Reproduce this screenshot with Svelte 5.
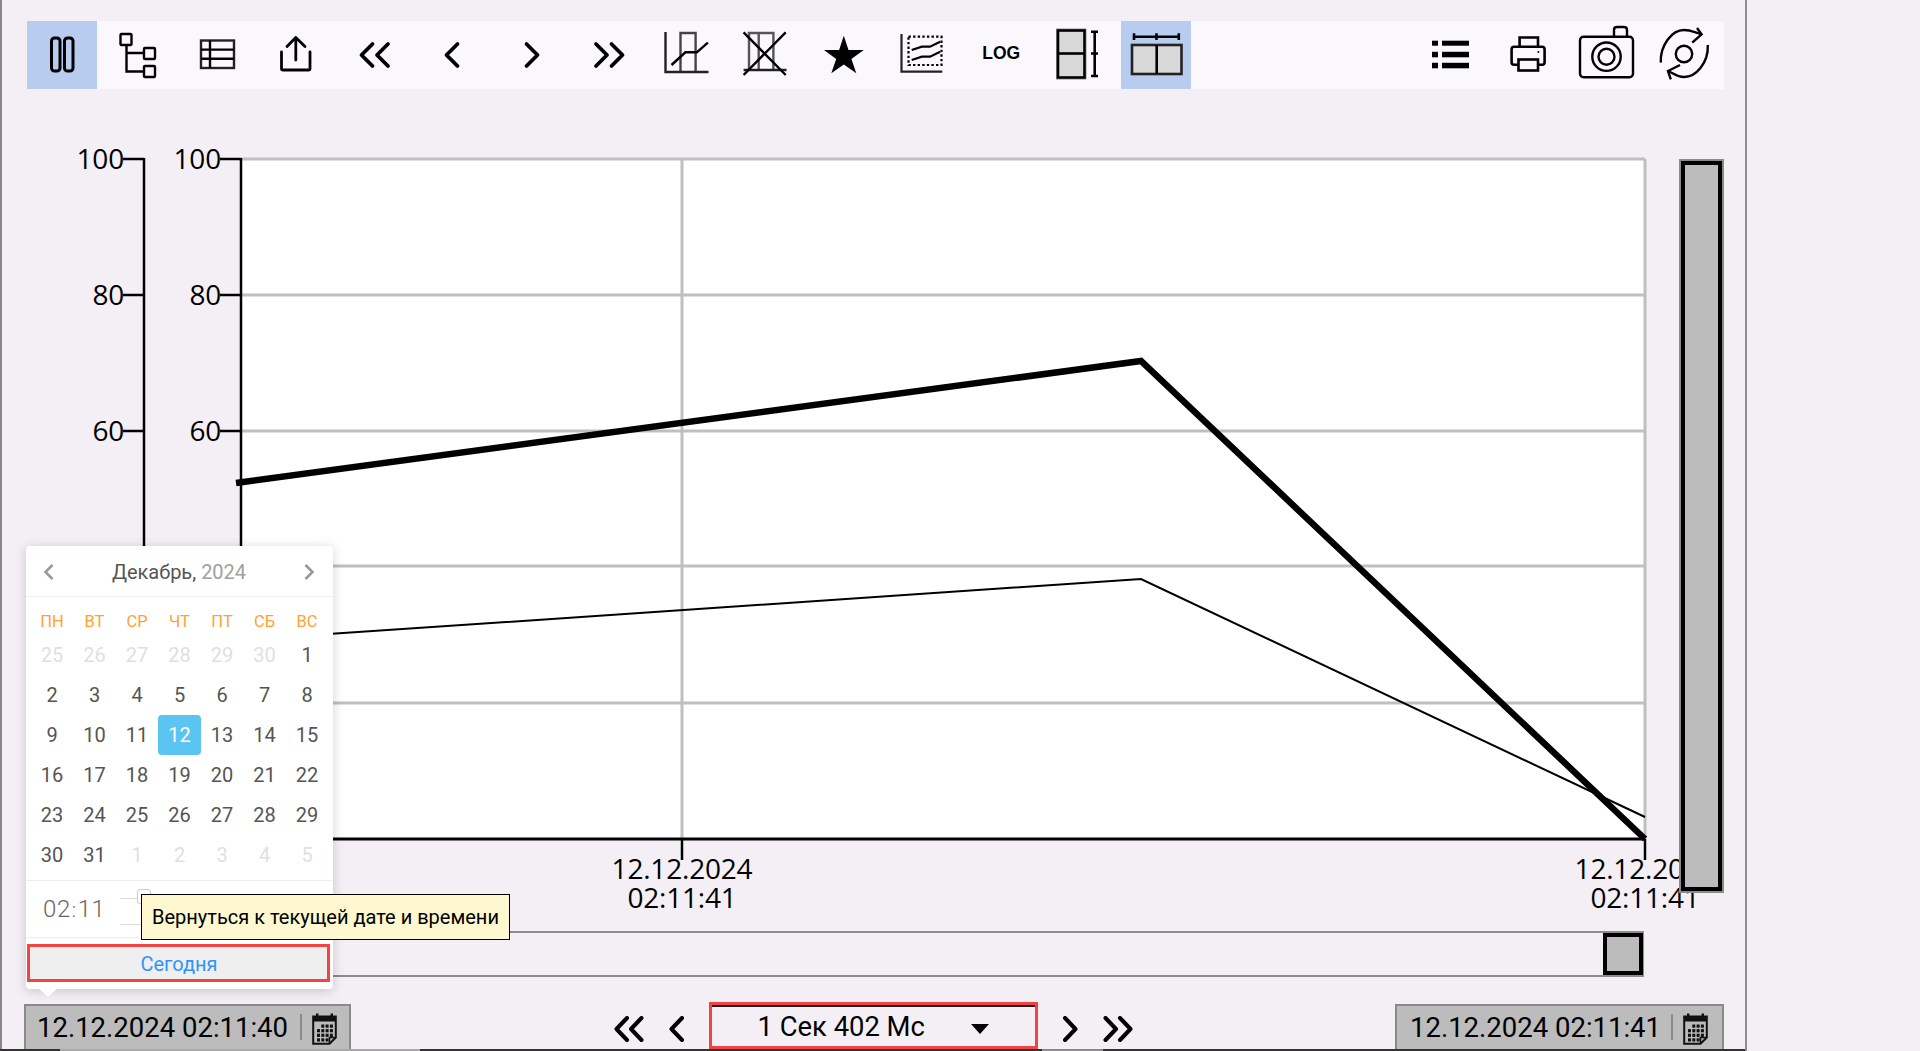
<script>
  const gridY = [159, 295, 431, 566, 703, 839]
  const ticks = [100, 80, 60, 40, 20, 0]
  const axes = [144, 241]

  const weekdays = ['ПН', 'ВТ', 'СР', 'ЧТ', 'ПТ', 'СБ', 'ВС']
  const days = []
  for (let d = 25; d <= 30; d++) days.push({ n: d, off: true })
  for (let d = 1; d <= 31; d++) days.push({ n: d, off: false })
  for (let d = 1; d <= 5; d++) days.push({ n: d, off: true })

  const calCells = []
  for (let r = 0; r < 4; r++) {
    for (let c = 0; c < 4; c++) {
      if (r === 3 && c === 3) continue
      if (r === 0 && c === 0) continue
      calCells.push({ x: 5 + c * 4.3, y: 11.5 + r * 4.6 })
    }
  }
</script>

{#snippet calIcon()}
  <svg class="cal" width="25" height="32" viewBox="0 0 25 32">
    <path d="M1.2 3.5H23.8V24.5L17.5 30.8H1.2Z" fill="none" stroke="#111" stroke-width="2" />
    <path d="M17.5 30.8V24.5H23.8" fill="none" stroke="#111" stroke-width="1.6" />
    <rect x="1" y="3.5" width="23" height="5" fill="#111" />
    <rect x="4" y="0.5" width="2.4" height="4" fill="#111" />
    <rect x="18.6" y="0.5" width="2.4" height="4" fill="#111" />
    {#each calCells as c}
      <rect x={c.x} y={c.y} width="3" height="3.2" fill="#111" />
    {/each}
  </svg>
{/snippet}

{#snippet dbl(flip)}
  <svg width="30" height="26" viewBox="0 0 30 26" class:flip>
    <path d="M13 2 L2.5 13 L13 24 M27.5 2 L17 13 L27.5 24" fill="none" stroke="#000" stroke-width="4" stroke-linecap="round" stroke-linejoin="round" />
  </svg>
{/snippet}

{#snippet single(flip)}
  <svg width="15" height="26" viewBox="0 0 15 26" class:flip>
    <path d="M13 2 L2.5 13 L13 24" fill="none" stroke="#000" stroke-width="4" stroke-linecap="round" stroke-linejoin="round" />
  </svg>
{/snippet}

<div class="page">
  <div class="toolbar">
    <button class="active" title="Пауза">
      <svg viewBox="0 0 70 68">
        <rect x="24.5" y="17" width="8.5" height="33" rx="3" fill="none" stroke="#000" stroke-width="3" />
        <rect x="37.5" y="17" width="8.5" height="33" rx="3" fill="none" stroke="#000" stroke-width="3" />
      </svg>
    </button>
    <button title="Дерево">
      <svg viewBox="0 0 70 68" fill="none" stroke="#000" stroke-width="2.4">
        <rect x="15.5" y="13" width="11" height="11" rx="1" />
        <rect x="39" y="27" width="11" height="11" rx="1" />
        <rect x="39" y="45" width="11" height="11" rx="1" />
        <path d="M21.5 24V50.5H39M21.5 32H39" />
      </svg>
    </button>
    <button title="Таблица">
      <svg viewBox="0 0 70 68" fill="none" stroke="#000" stroke-width="2.4">
        <rect x="18" y="19.5" width="33" height="27.5" stroke="#222" />
        <path d="M27 19.5V47M18 28.6H51M18 37.8H51" />
      </svg>
    </button>
    <button title="Экспорт">
      <svg viewBox="0 0 70 68" fill="none" stroke="#000" stroke-width="2.8" stroke-linecap="round" stroke-linejoin="round">
        <path d="M20.5 31V47.5Q20.5 49 22 49H47.5Q49 49 49 47.5V31" />
        <path d="M34.8 17V39M26 25.5L34.8 16.5L44 25.5" />
      </svg>
    </button>
    <button title="В начало">
      <svg viewBox="0 0 70 68" fill="none" stroke="#000" stroke-width="3.8" stroke-linecap="round" stroke-linejoin="round">
        <path d="M32.5 23L21.5 34L32.5 45M48 23L37 34L48 45" />
      </svg>
    </button>
    <button title="Назад">
      <svg viewBox="0 0 70 68" fill="none" stroke="#000" stroke-width="3.8" stroke-linecap="round" stroke-linejoin="round">
        <path d="M39.5 23L28.5 34L39.5 45" />
      </svg>
    </button>
    <button title="Вперёд">
      <svg viewBox="0 0 70 68" fill="none" stroke="#000" stroke-width="3.8" stroke-linecap="round" stroke-linejoin="round">
        <path d="M30.5 23L41.5 34L30.5 45" />
      </svg>
    </button>
    <button title="В конец">
      <svg viewBox="0 0 70 68" fill="none" stroke="#000" stroke-width="3.8" stroke-linecap="round" stroke-linejoin="round">
        <path d="M22 23L33 34L22 45M37.5 23L48.5 34L37.5 45" />
      </svg>
    </button>
    <button title="Зум">
      <svg viewBox="0 0 70 68" fill="none" stroke-width="2.4">
        <path d="M28.5 51V12H43.6V51" stroke="#444" />
        <path d="M13.5 11V51H56.5" stroke="#222" />
        <path d="M19.5 44L33.4 31.3H44.8L55.9 21.7" stroke="#000" />
      </svg>
    </button>
    <button title="Сбросить зум">
      <svg viewBox="0 0 70 68" fill="none" stroke-width="2.4">
        <path d="M19 49V12H43.4V49M28.7 12V49" stroke="#555" />
        <path d="M13.6 49H56.5" stroke="#222" />
        <path d="M13.6 11.3L55.7 54M55.7 11.3L13.6 54" stroke="#000" />
      </svg>
    </button>
    <button title="Избранное">
      <svg viewBox="0 0 70 68">
        <polygon points="35.8,14.7 40.5,29 55.7,29 43.4,38 48.3,52.3 35.8,43.5 23.3,52.3 28.2,38 16,29 31.1,29" fill="#000" />
      </svg>
    </button>
    <button title="Область">
      <svg viewBox="0 0 70 68" fill="none" stroke="#000" stroke-width="2.2">
        <path d="M14.5 13V50.7H55.3" stroke="#222" />
        <rect x="21.5" y="15.7" width="33" height="28.3" stroke-dasharray="2.4 2.2" />
        <path d="M24.7 29L34.9 25.7H43L53.2 20.7M24.7 39L34.9 35.7H43L53.2 30.7" />
      </svg>
    </button>
    <button class="log" title="Логарифм">LOG</button>
    <button title="Вертикально">
      <svg viewBox="0 0 70 68" fill="none" stroke="#000" stroke-width="2.6">
        <rect x="13.5" y="8" width="29.5" height="50" fill="#d8d8d8" stroke="#8f8f8f" stroke-width="1" />
        <rect x="15" y="9.5" width="26.5" height="47" stroke="#000" />
        <path d="M15 32.5H41.5" />
        <path d="M51.7 10.7V55M48 10.7H55M48 32.5H55M48 55H55" />
      </svg>
    </button>
    <button class="active" title="Горизонтально">
      <svg viewBox="0 0 70 68" fill="none" stroke="#000" stroke-width="2.6">
        <rect x="11" y="24" width="49.5" height="29" fill="#d8d8d8" stroke="#222" />
        <path d="M35.7 24V53" />
        <path d="M13 15.7H57.8M13 12.3V19M35.5 12.3V19M57.8 12.3V19" />
      </svg>
    </button>

    <div class="spacer"></div>

    <button title="Легенда">
      <svg viewBox="0 0 70 68" fill="#000">
        <rect x="17" y="19.7" width="6" height="5" />
        <rect x="17" y="30.8" width="6" height="5.5" />
        <rect x="17" y="41.8" width="6" height="5.5" />
        <rect x="27" y="19.7" width="27" height="5" />
        <rect x="27" y="30.8" width="27" height="5.5" />
        <rect x="27" y="41.8" width="27" height="5.5" />
      </svg>
    </button>
    <button title="Печать">
      <svg viewBox="0 0 70 68" fill="none" stroke="#000" stroke-width="2.6">
        <path d="M26.6 25.7V16.5H45V25.7" />
        <rect x="18.6" y="25.7" width="33" height="18" rx="2.5" />
        <rect x="25.5" y="38.5" width="19.5" height="11" fill="#faf8fc" />
        <circle cx="45.4" cy="31" r="1" fill="#000" stroke="none" />
      </svg>
    </button>
    <button title="Снимок">
      <svg viewBox="0 0 70 68" fill="none" stroke="#000" stroke-width="2.4">
        <path d="M43 15.7V9Q43 6 46 6H53Q56 6 56 9V15.7" />
        <rect x="9" y="15.7" width="53" height="40.5" rx="3.5" />
        <circle cx="35.5" cy="35.7" r="14.2" />
        <circle cx="35.5" cy="35.7" r="8" />
      </svg>
    </button>
    <button title="Обновить">
      <svg viewBox="0 0 70 68" fill="none" stroke="#000" stroke-width="2.4">
        <circle cx="35" cy="33" r="8.2" />
        <path d="M11.8 41.5C11 24 23 9 35 9C42 9 47 12 52 13" />
        <path d="M48 7L52.6 13.4L43.2 21.7" />
        <path d="M58.8 24C59.5 42 47 56 35 56C28 56 24 52 19 50" />
        <path d="M31 44L19 50L21.8 58.3" />
      </svg>
    </button>
  </div>

  <div class="chart">
    <svg class="plot" width="1745" height="915" viewBox="0 89 1745 915">
      <rect x="241" y="159" width="1404" height="680" fill="#fff" />
      {#each gridY.slice(0, 5) as y}
        <line x1="241" x2="1645" y1={y} y2={y} stroke="#bfbfbf" stroke-width="3" />
      {/each}
      <line x1="682" x2="682" y1="159" y2="839" stroke="#bfbfbf" stroke-width="3" />
      <line x1="1645" x2="1645" y1="159" y2="839" stroke="#bfbfbf" stroke-width="3" />

      {#each axes as ax}
        <line x1={ax} x2={ax} y1="158" y2="840" stroke="#000" stroke-width="2.5" />
        {#each gridY as y, i}
          <line x1={ax - 21} x2={ax} y1={y} y2={y} stroke="#000" stroke-width="2.5" />
          <text x={ax - 20} y={y + 10} text-anchor="end" class="lbl">{ticks[i]}</text>
        {/each}
      {/each}

      <line x1="240" x2="1645" y1="839" y2="839" stroke="#000" stroke-width="3" />
      <line x1="682" x2="682" y1="839" y2="860" stroke="#000" stroke-width="2.5" />
      <line x1="1645" x2="1645" y1="839" y2="860" stroke="#000" stroke-width="2.5" />

      <polyline points="241,640 1141,579 1645,817" fill="none" stroke="#000" stroke-width="2" />
      <polyline points="236,483 1141,361 1645,839" fill="none" stroke="#000" stroke-width="6.5" />

      <text x="682" y="879" text-anchor="middle" class="lbl">12.12.2024</text>
      <text x="682" y="908" text-anchor="middle" class="lbl">02:11:41</text>
      <text x="1645" y="879" text-anchor="middle" class="lbl">12.12.2024</text>
      <text x="1645" y="908" text-anchor="middle" class="lbl">02:11:41</text>
    </svg>
    <div class="vscroll"></div>
    <div class="hscroll"><div class="thumb"></div></div>
  </div>

  <div class="bottom">
    <div class="date">
      <span>12.12.2024 02:11:40</span>
      <i class="sep"></i>
      {@render calIcon()}
    </div>
    <div class="nav">
      {@render dbl(false)}
      {@render single(false)}
      <div class="period">
        <span>1 Сек 402 Мс</span>
        <i class="caret"></i>
      </div>
      {@render single(true)}
      {@render dbl(true)}
    </div>
    <div class="date to">
      <span>12.12.2024 02:11:41</span>
      <i class="sep"></i>
      {@render calIcon()}
    </div>
  </div>

  <div class="edge"></div>

  <div class="popup">
    <div class="head">
      <svg width="12" height="18" viewBox="0 0 12 18"><path d="M9.5 2L2.5 9L9.5 16" fill="none" stroke="#999" stroke-width="2.6" /></svg>
      <div class="month">Декабрь, <span>2024</span></div>
      <svg width="12" height="18" viewBox="0 0 12 18"><path d="M2.5 2L9.5 9L2.5 16" fill="none" stroke="#999" stroke-width="2.6" /></svg>
    </div>
    <div class="weekdays">
      {#each weekdays as w}<span>{w}</span>{/each}
    </div>
    <div class="days">
      {#each days as d}
        <span class:off={d.off} class:sel={!d.off && d.n === 12}>{d.n}</span>
      {/each}
    </div>
    <div class="time">
      <span class="hm">02<em>:</em>11</span>
      <div class="spin"><i></i></div>
    </div>
    <button class="today">Сегодня</button>
    <i class="tail"></i>
  </div>

  <div class="tip">Вернуться к текущей дате и времени</div>
</div>

<style>
  :global(body) {
    background: #f4eff5;
    overflow: hidden;
  }

  .page {
    position: relative;
    box-sizing: border-box;
    width: 1747px;
    height: 1051px;
    padding-top: 21px;
    border-right: 2px solid #8e8e8e;
    box-shadow: inset 2px 0 0 #868686;
    overflow: hidden;
    font-family: Roboto, sans-serif;
  }

  .toolbar {
    display: flex;
    gap: 8.15px;
    height: 68px;
    margin: 0 21px 0 27px;
    padding-right: 5px;
    background: #faf8fc;
  }

  .toolbar button {
    flex: none;
    width: 70px;
    height: 68px;
    padding: 0;
    border: 0;
    background: none;
  }

  .toolbar button.active {
    background: #b7ccee;
  }

  .toolbar svg {
    display: block;
    width: 70px;
    height: 68px;
  }

  .toolbar .log {
    padding-bottom: 3px;
    padding-left: 3px;
    font: bold 17.5px "Liberation Sans", sans-serif;
    color: #000;
  }

  .spacer {
    flex: 1;
  }

  .chart {
    position: relative;
    height: 915px;
  }

  .plot {
    display: block;
  }

  .lbl {
    font-family: "Open Sans", sans-serif;
    font-size: 28px;
    letter-spacing: -0.2px;
    fill: #000;
  }

  .vscroll {
    position: absolute;
    left: 1681px;
    top: 72px;
    box-sizing: border-box;
    width: 41px;
    height: 730px;
    background: #bcbcbc;
    border: 4px solid #000;
    outline: 2px solid #8a8a8a;
  }

  .hscroll {
    position: absolute;
    left: 27px;
    top: 842px;
    box-sizing: border-box;
    width: 1617px;
    height: 46px;
    border-top: 2px solid #8c8c8c;
    border-bottom: 2px solid #8c8c8c;
    border-right: 1px solid #8c8c8c;
  }

  .thumb {
    box-sizing: border-box;
    width: 40px;
    height: 42px;
    margin-left: auto;
    background: #bcbcbc;
    border: 4px solid #000;
  }

  .bottom {
    display: flex;
    justify-content: space-between;
    height: 47px;
    padding: 0 21px 0 24px;
  }

  .date {
    display: flex;
    align-items: center;
    box-sizing: border-box;
    width: 327px;
    height: 47px;
    padding: 0 0 3px 11px;
    background: #bcbcbc;
    border: 2px solid #8a8a8a;
    border-bottom: 0;
    font-size: 27.5px;
    color: #000;
    white-space: nowrap;
  }

  .date.to {
    width: 329px;
    padding-left: 13px;
  }

  .sep {
    flex: none;
    width: 2px;
    height: 26px;
    margin: 0 10px 0 12px;
    background: #8a8a8a;
  }

  .date.to .sep {
    margin-left: 10px;
  }

  .cal {
    flex: none;
    margin-top: 4px;
  }

  .nav {
    display: flex;
    align-items: center;
    gap: 25px;
    padding-top: 3px;
  }

  .flip {
    transform: scaleX(-1);
  }

  .period {
    display: flex;
    align-items: center;
    align-self: flex-start;
    box-sizing: border-box;
    width: 329px;
    height: 47px;
    margin-top: -5px;
    padding: 2px 0 0 46px;
    border: 3px solid #ef4444;
    box-shadow: inset 0 2px 0 #222;
    font-size: 27.4px;
    color: #000;
    white-space: nowrap;
  }

  .caret {
    margin: 4px 0 0 46px;
    border-style: solid;
    border-width: 10px 9px 0;
    border-color: #000 transparent transparent;
  }

  .edge {
    position: absolute;
    left: 0;
    right: 0;
    bottom: 0;
    height: 2px;
    background: linear-gradient(to right, #333 60px, #a8a8a8 60px, #a8a8a8 420px, #333 420px, #333 1042px, #8a8a8a 1042px, #8a8a8a 1103px, #333 1103px);
  }

  .popup {
    position: absolute;
    left: 26px;
    top: 546px;
    box-sizing: border-box;
    width: 307px;
    height: 443px;
    background: #fff;
    border-radius: 4px;
    box-shadow: 0 2px 12px rgba(0, 0, 0, 0.18);
    color: #555;
  }

  .head {
    display: flex;
    align-items: center;
    justify-content: space-between;
    box-sizing: border-box;
    height: 51px;
    padding: 2px 18px 0 17px;
    border-bottom: 1px solid #eee;
  }

  .month {
    font-size: 20px;
    color: #555;
  }

  .month span {
    color: #a0a0a0;
  }

  .weekdays,
  .days {
    display: grid;
    grid-template-columns: repeat(7, 42.5px);
    padding-left: 4.75px;
    text-align: center;
  }

  .weekdays {
    padding-top: 14px;
    height: 21px;
    margin-bottom: 3px;
    font-size: 16.5px;
    line-height: 22px;
    color: #ffa233;
  }

  .days span {
    height: 40px;
    font-size: 20px;
    line-height: 40px;
    border-radius: 4px;
  }

  .days .off {
    color: #dfdfdf;
  }

  .days .sel {
    background: #5bc5f2;
    color: #fff;
  }

  .time {
    position: relative;
    display: flex;
    align-items: center;
    box-sizing: border-box;
    height: 58px;
    margin-top: 5px;
    padding-left: 17px;
    border-top: 1px solid #eee;
    border-bottom: 1px solid #eee;
  }

  .hm {
    font-size: 24px;
    font-weight: 300;
    letter-spacing: 0.6px;
    color: #666;
  }

  .hm em {
    font-style: normal;
    font-size: 20px;
    padding: 0 1px;
  }

  .spin {
    position: absolute;
    left: 94px;
    top: 17px;
    width: 30px;
    height: 25px;
    border-top: 1px solid #ddd;
    border-bottom: 1px solid #ddd;
  }

  .spin i {
    position: absolute;
    left: 17px;
    top: -10px;
    box-sizing: border-box;
    width: 14px;
    height: 15px;
    background: #fff;
    border: 1px solid #ccc;
    border-radius: 3px;
  }

  .today {
    display: block;
    box-sizing: border-box;
    width: 303px;
    height: 38px;
    margin: 6px 0 0 1px;
    padding: 1px 0 0 1px;
    background: #efefef;
    border: 3px solid #f24545;
    font: 20px Roboto, sans-serif;
    color: #2f93ff;
  }

  .tail {
    position: absolute;
    left: 13px;
    bottom: -8px;
    border-style: solid;
    border-width: 8px 9px 0;
    border-color: #fff transparent transparent;
  }

  .tip {
    position: absolute;
    left: 141px;
    top: 894px;
    box-sizing: border-box;
    height: 46px;
    padding: 0 10px;
    background: #fdf8cf;
    border: 1px solid #000;
    font-size: 20px;
    line-height: 44px;
    color: #000;
    white-space: nowrap;
  }
</style>
